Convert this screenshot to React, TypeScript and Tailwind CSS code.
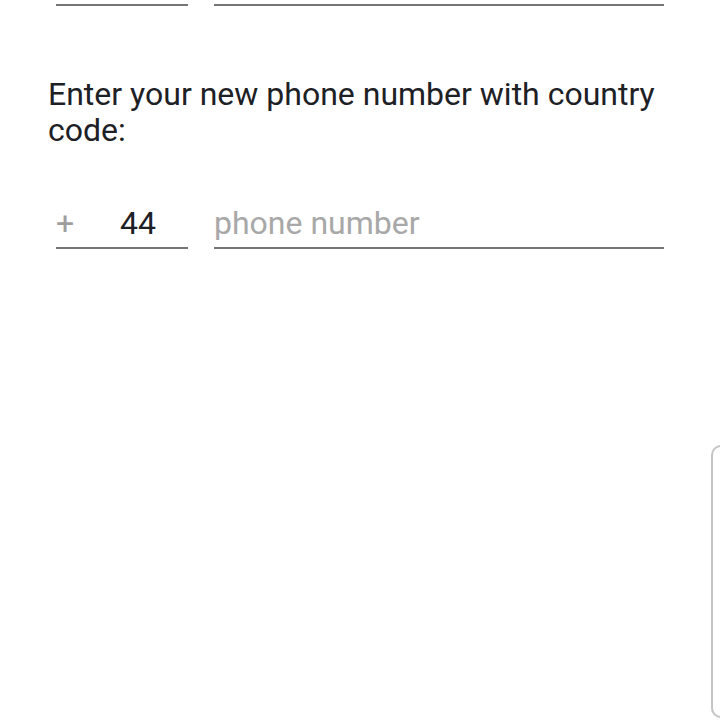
import React from "react";

export default function App() {
  return (
    <div className="relative w-[720px] h-[720px] overflow-hidden bg-white" style={{ fontFamily: "Roboto, 'Noto Sans', sans-serif" }}>
      <div className="flex pl-[56px] pt-[4px] gap-[26px]">
        <div className="w-[132px] h-[2px] bg-[#757575]" />
        <div className="w-[450px] h-[2px] bg-[#757575]" />
      </div>
      <div className="pl-[48px] pr-[30px] pt-[70px] text-[32px] leading-[36px] text-[#1d2125]">
        Enter your new phone number with country code:
      </div>
      <div className="flex pl-[56px] pt-[55px] gap-[26px]">
        <div className="w-[132px] flex flex-col">
          <div className="flex items-end h-[40px] text-[32px] leading-[40px]">
            <span className="text-[#9e9e9e] w-[64px]">+</span>
            <span className="text-[#1d2125]">44</span>
          </div>
          <div className="h-[2px] bg-[#757575] mt-[4px]" />
        </div>
        <div className="w-[450px] flex flex-col">
          <div className="h-[40px] text-[32px] leading-[40px] text-[#a8a8a8]">phone number</div>
          <div className="h-[2px] bg-[#757575] mt-[4px]" />
        </div>
      </div>
      <div className="absolute left-[711px] top-[445px] w-[20px] h-[273px] border-2 border-[#c4c4c4] rounded-[10px]" />
    </div>
  );
}
